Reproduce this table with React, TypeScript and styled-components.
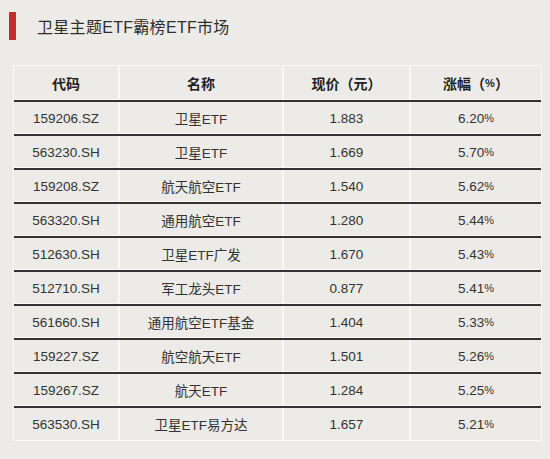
import { FC } from 'react';
import styled, { createGlobalStyle } from 'styled-components';

const GlobalStyle = createGlobalStyle`
    body {
        margin: 0;
        background: #ecebe7;
        font-family: "Liberation Sans", "Noto Sans CJK SC", sans-serif;
        color: #333;
    }
`

const Page = styled.div`
    width: 550px;
    height: 459px;
    background: #ecebe7;
    box-sizing: border-box;
    padding: 12px 0 0 0;
`

const TitleRow = styled.div`
    display: flex;
    align-items: center;
    height: 28px;
    gap: 21px;
    padding-left: 9px;
`

const RedBar = styled.div`
    width: 7px;
    height: 28px;
    background: #c1302f;
`

const Title = styled.h1`
    margin: 0;
    font-size: 16px;
    font-weight: normal;
    color: #2e2e2e;
    letter-spacing: 0.3px;
`

const Table = styled.div`
    margin: 25px 0 0 13px;
    width: 529px;
    border: 1px solid #f8f8f6;
    box-sizing: border-box;
`

const Row = styled.div<{ $head?: boolean }>`
    display: grid;
    grid-template-columns: 106px 164px 127px 1fr;
    height: ${p => p.$head ? 34 : 32}px;
    border-bottom: 2px solid #333;
    box-shadow: inset 0 -1px 0 #f8f8f6;
    &:last-child {
        border-bottom: 0;
        box-shadow: none;
    }
`

const Cell = styled.div<{ $head?: boolean }>`
    display: flex;
    align-items: center;
    justify-content: center;
    font-size: ${p => p.$head ? 14 : 13.5}px;
    font-weight: ${p => p.$head ? 'bold' : 'normal'};
    color: ${p => p.$head ? '#222' : '#333'};
    border-right: 2px solid #f8f8f6;
    &:last-child {
        border-right: 0;
    }
`

const Small = styled.span`
    font-size: 11px;
`

const rows = [
    ['159206.SZ', '卫星ETF', '1.883', '6.20'],
    ['563230.SH', '卫星ETF', '1.669', '5.70'],
    ['159208.SZ', '航天航空ETF', '1.540', '5.62'],
    ['563320.SH', '通用航空ETF', '1.280', '5.44'],
    ['512630.SH', '卫星ETF广发', '1.670', '5.43'],
    ['512710.SH', '军工龙头ETF', '0.877', '5.41'],
    ['561660.SH', '通用航空ETF基金', '1.404', '5.33'],
    ['159227.SZ', '航空航天ETF', '1.501', '5.26'],
    ['159267.SZ', '航天ETF', '1.284', '5.25'],
    ['563530.SH', '卫星ETF易方达', '1.657', '5.21'],
]

const App: FC = () => {
    return (
        <Page>
            <GlobalStyle />
            <TitleRow>
                <RedBar />
                <Title>卫星主题ETF霸榜ETF市场</Title>
            </TitleRow>
            <Table>
                <Row $head>
                    <Cell $head>代码</Cell>
                    <Cell $head>名称</Cell>
                    <Cell $head>现价（元）</Cell>
                    <Cell $head>涨幅（<Small>%</Small>）</Cell>
                </Row>
                {rows.map(r => (
                    <Row key={r[0]}>
                        <Cell>{r[0]}</Cell>
                        <Cell>{r[1]}</Cell>
                        <Cell>{r[2]}</Cell>
                        <Cell>{r[3]}<Small>%</Small></Cell>
                    </Row>
                ))}
            </Table>
        </Page>
    )
}

export default App;
